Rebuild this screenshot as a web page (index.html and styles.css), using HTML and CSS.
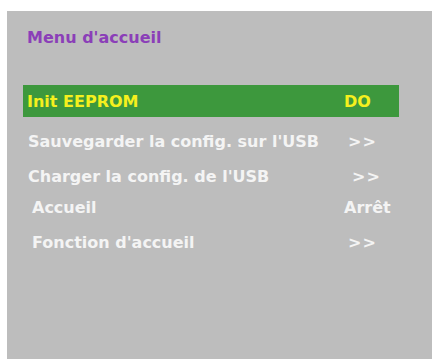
FILE: index.html
```html
<!DOCTYPE html>
<html lang="fr">
<head>
<meta charset="utf-8">
<title>Menu d'accueil</title>
<link rel="stylesheet" href="styles.css">
</head>
<body>
<div class="panel">
  <div class="title">Menu d'accueil</div>
  <div class="menu">
    <div class="row row-active"><span class="label">Init EEPROM</span><span class="value">DO</span></div>
    <div class="row row-save"><span class="label">Sauvegarder la config. sur l'USB</span><span class="value arrows">&gt;&gt;</span></div>
    <div class="row row-load"><span class="label">Charger la config. de l'USB</span><span class="value arrows">&gt;&gt;</span></div>
    <div class="row row-home"><span class="label">Accueil</span><span class="value">Arrêt</span></div>
    <div class="row row-func"><span class="label">Fonction d'accueil</span><span class="value arrows">&gt;&gt;</span></div>
  </div>
</div>
</body>
</html>
```
FILE: styles.css
```css
html, body {
  margin: 0;
  padding: 0;
  background: #ffffff;
}
body {
  font-family: "DejaVu Sans", Verdana, sans-serif;
  font-weight: bold;
  font-size: 16px;
}
.panel {
  margin: 11px 0 0 7px;
  width: 425px;
  height: 348px;
  box-sizing: border-box;
  background: #bdbdbd;
  padding: 17px 0 0 16px;
}
.title {
  color: #8b3fb8;
  line-height: 20px;
  padding-left: 4px;
}
.menu {
  margin-top: 37px;
  width: 376px;
  display: flex;
  flex-direction: column;
}
.row {
  display: grid;
  line-height: 24px;
  color: #f4f4f4;
  white-space: nowrap;
}
.row-active {
  background: #3d983d;
  color: #f5f01e;
  line-height: 30px;
  padding: 2px 0 0 4px;
  grid-template-columns: 317px auto;
}
.row-save { margin-top: 13px; padding-left: 5px; grid-template-columns: 320px auto; }
.row-load { margin-top: 11px; padding-left: 5px; grid-template-columns: 324px auto; }
.row-home { margin-top: 7px; padding-left: 9px; grid-template-columns: 312px auto; }
.row-func { margin-top: 11px; padding-left: 9px; grid-template-columns: 316px auto; }
.arrows {
  letter-spacing: 1px;
}
```
